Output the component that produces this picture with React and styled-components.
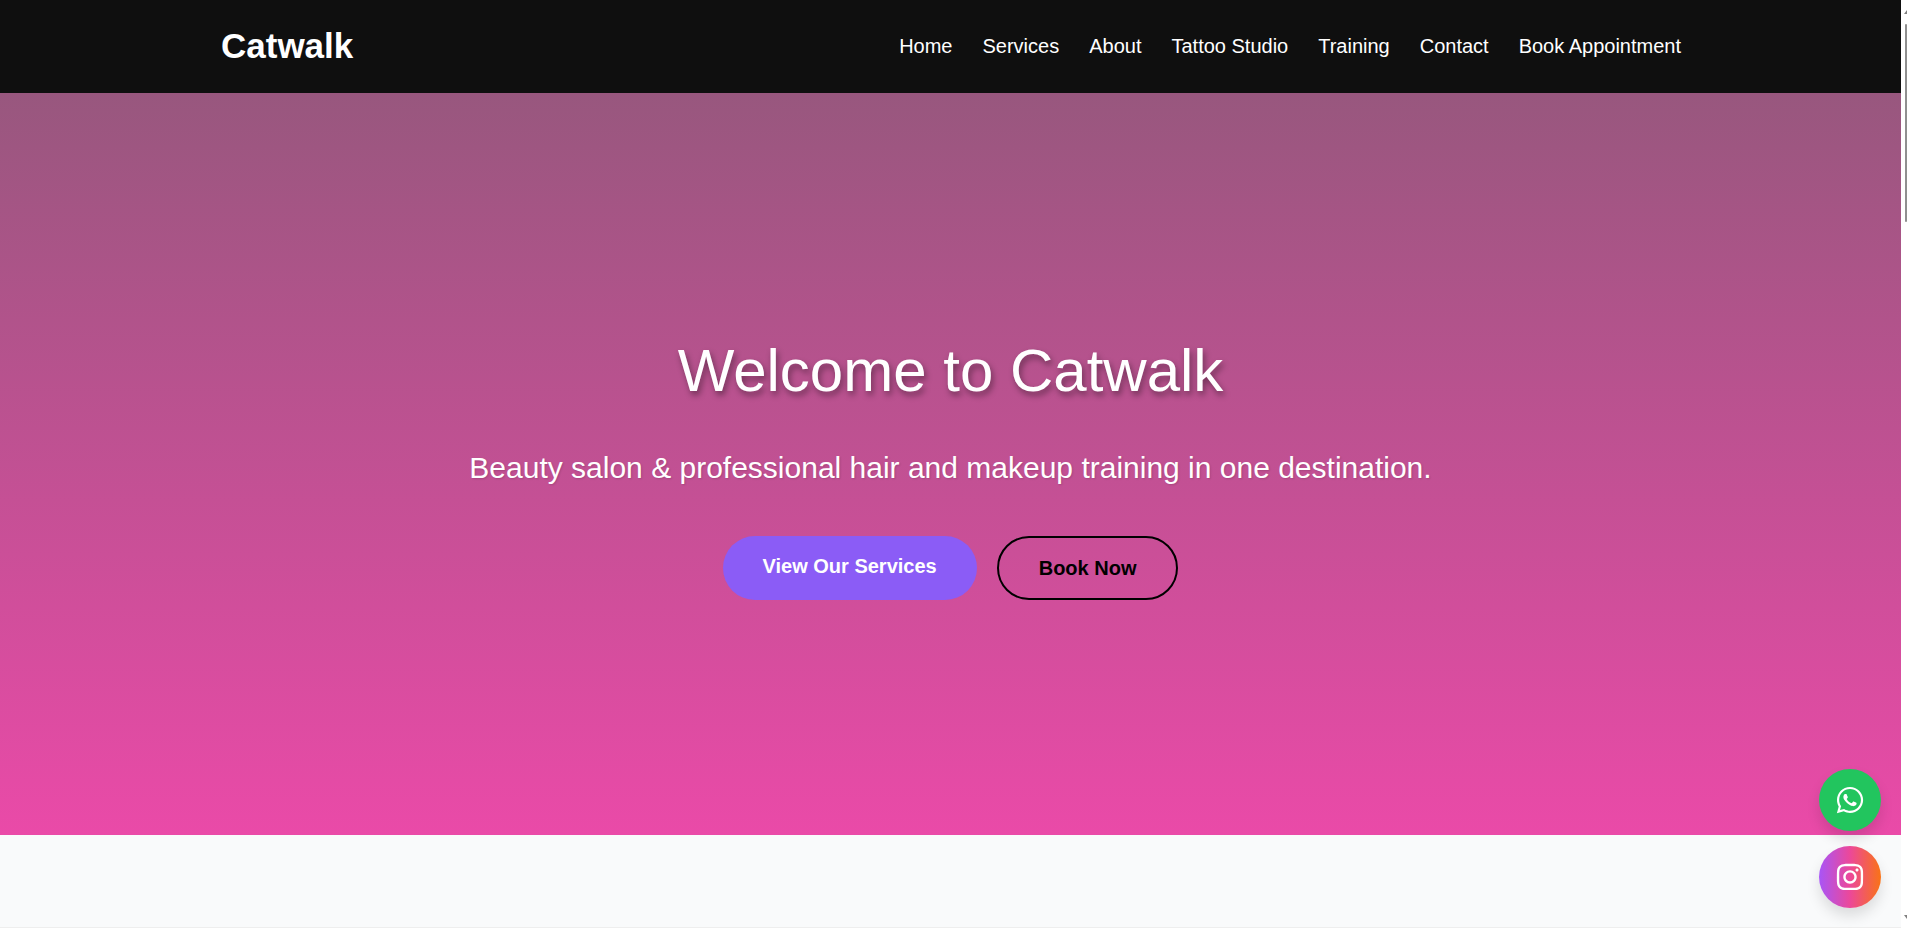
import React from 'react';
import styled, { createGlobalStyle } from 'styled-components';
import { FaWhatsapp, FaInstagram } from 'react-icons/fa';

const GlobalStyle = createGlobalStyle`
  html, body {
    margin: 0;
    padding: 0;
    height: 100%;
    overflow: hidden;
    background: #ffffff;
    font-family: "Liberation Sans", Arial, sans-serif;
  }
`;

const Page = styled.div`
  display: flex;
  height: 928px;
  width: 1907px;
  overflow: hidden;
`;

const Main = styled.div`
  width: 1901px;
  display: flex;
  flex-direction: column;
  background: #f9fafb;
`;

const Header = styled.header`
  height: 93px;
  flex-shrink: 0;
  background: #0f0f0f;
  display: flex;
  align-items: center;
  justify-content: space-between;
  padding: 0 220px 0 221px;
`;

const Logo = styled.div`
  color: #ffffff;
  font-size: 35px;
  font-weight: 700;
  margin-top: -2px;
`;

const Nav = styled.nav`
  display: flex;
  gap: 30px;
`;

const NavLink = styled.a`
  color: #ffffff;
  font-size: 20px;
`;

const Hero = styled.section`
  height: 742px;
  flex-shrink: 0;
  background: linear-gradient(180deg, #98577e 0%, #ea4aa8 100%);
  display: flex;
  flex-direction: column;
  align-items: center;
  padding-top: 243px;
  box-sizing: border-box;
`;

const Title = styled.h1`
  margin: 0;
  color: #ffffff;
  font-size: 60px;
  font-weight: 400;
  line-height: 70px;
  text-shadow: 2px 4px 6px rgba(0, 0, 0, 0.4);
`;

const Subtitle = styled.p`
  margin: 44px 0 0;
  color: #ffffff;
  font-size: 30px;
  line-height: 36px;
  text-shadow: 1px 1px 2px rgba(0, 0, 0, 0.15);
`;

const Actions = styled.div`
  display: flex;
  gap: 20px;
  margin-top: 50px;
`;

const Button = styled.a`
  height: 64px;
  box-sizing: border-box;
  padding: ${(p) => (p.$outline ? '0 40px' : '0 40px 4px')};
  border-radius: 32px;
  display: flex;
  align-items: center;
  font-size: 20px;
  font-weight: 700;
  color: ${(p) => (p.$outline ? '#000000' : '#ffffff')};
  background: ${(p) => (p.$outline ? 'transparent' : '#8b5cf6')};
  border: ${(p) => (p.$outline ? '2px solid #000000' : 'none')};
`;

const Floating = styled.div`
  position: fixed;
  right: 26px;
  bottom: 20px;
  display: flex;
  flex-direction: column;
  gap: 15px;
`;

const RoundLink = styled.a`
  width: 62px;
  height: 62px;
  border-radius: 50%;
  display: flex;
  align-items: center;
  justify-content: center;
  color: #ffffff;
  font-size: 30px;
  background: ${(p) => p.$bg};
  box-shadow: 0 8px 14px rgba(0, 0, 0, 0.12);
`;

const BottomLine = styled.div`
  margin-top: auto;
  height: 1px;
  background: #eeeeee;
`;

const Rail = styled.div`
  width: 6px;
  position: relative;
`;

const Thumb = styled.div`
  position: absolute;
  top: 24px;
  left: 4px;
  width: 2px;
  height: 198px;
  background: #8f8f8f;
  border-radius: 1px;
`;

const Arrow = styled.div`
  position: absolute;
  left: 3px;
  top: ${(p) => (p.$down ? '915px' : '10px')};
  width: 0;
  height: 0;
  border-left: 3px solid transparent;
  border-right: 3px solid transparent;
  border-top: ${(p) => (p.$down ? '4px solid #808080' : 'none')};
  border-bottom: ${(p) => (p.$down ? 'none' : '4px solid #808080')};
`;

const links = ['Home', 'Services', 'About', 'Tattoo Studio', 'Training', 'Contact', 'Book Appointment'];

export default function App() {
  return (
    <>
      <GlobalStyle />
      <Page>
        <Main>
          <Header>
            <Logo>Catwalk</Logo>
            <Nav>
              {links.map((l) => (
                <NavLink key={l}>{l}</NavLink>
              ))}
            </Nav>
          </Header>
          <Hero>
            <Title>Welcome to Catwalk</Title>
            <Subtitle>Beauty salon &amp; professional hair and makeup training in one destination.</Subtitle>
            <Actions>
              <Button>View Our Services</Button>
              <Button $outline>Book Now</Button>
            </Actions>
          </Hero>
          <BottomLine />
        </Main>
        <Rail>
          <Arrow />
          <Thumb />
          <Arrow $down />
        </Rail>
        <Floating>
          <RoundLink $bg="#22c55e"><FaWhatsapp /></RoundLink>
          <RoundLink $bg="linear-gradient(90deg, #a855f7, #ec4899, #f97316)"><FaInstagram /></RoundLink>
        </Floating>
      </Page>
    </>
  );
}
